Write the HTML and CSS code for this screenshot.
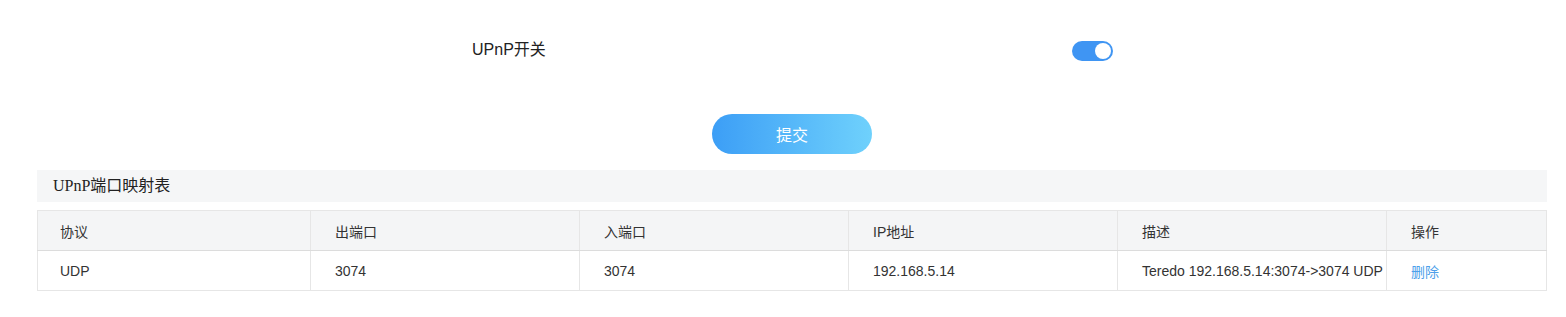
FILE: index.html
```html
<!DOCTYPE html>
<html lang="zh">
<head>
<meta charset="utf-8">
<title>UPnP</title>
<link rel="stylesheet" href="styles.css">
</head>
<body>
<div class="page">
  <div class="form-row">
    <div class="label">UPnP开关</div>
    <div class="switch"><span class="knob"></span></div>
  </div>
  <div class="actions">
    <button class="submit" type="button">提交</button>
  </div>
  <div class="section-title">UPnP端口映射表</div>
  <table class="map-table">
    <colgroup>
      <col class="c1"><col class="c2"><col class="c3"><col class="c4"><col class="c5"><col class="c6">
    </colgroup>
    <thead>
      <tr><th>协议</th><th>出端口</th><th>入端口</th><th>IP地址</th><th>描述</th><th>操作</th></tr>
    </thead>
    <tbody>
      <tr><td>UDP</td><td>3074</td><td>3074</td><td>192.168.5.14</td><td>Teredo 192.168.5.14:3074-&gt;3074 UDP</td><td><a class="del">删除</a></td></tr>
    </tbody>
  </table>
</div>
</body>
</html>
```

FILE: styles.css
```css
* { box-sizing: border-box; }
body {
  margin: 0;
  background: #fff;
  font-family: "Liberation Sans", Arial, "Noto Sans CJK SC", sans-serif;
  color: #333;
}
.page {
  padding: 0 19px 0 37px;
}
.form-row {
  display: flex;
  align-items: flex-start;
  margin-top: 41px;
  padding-left: 435px;
}
.label {
  width: 600px;
  font-size: 16px;
  line-height: 18px;
  color: #222;
}
.switch {
  width: 41px;
  height: 20px;
  border-radius: 10px;
  background: #3f95f3;
  display: flex;
  align-items: center;
  justify-content: flex-end;
  padding-right: 2px;
}
.knob {
  width: 16px;
  height: 16px;
  border-radius: 50%;
  background: #fff;
}
.actions {
  display: flex;
  justify-content: center;
  margin-top: 53px;
}
.submit {
  width: 160px;
  height: 40px;
  border: none;
  border-radius: 20px;
  background: linear-gradient(90deg, #3c9ef6 0%, #6fd1fc 100%);
  color: #fff;
  font-family: "Liberation Sans", "Noto Sans CJK SC", sans-serif;
  font-size: 16px;
  padding: 0;
}
.section-title {
  margin-top: 16px;
  height: 32px;
  background: #f5f6f7;
  font-family: "Liberation Serif", "Noto Sans CJK SC", serif;
  font-size: 16px;
  line-height: 32px;
  padding-left: 16px;
  color: #222;
}
.map-table {
  margin-top: 8px;
  width: 100%;
  border-collapse: collapse;
  table-layout: fixed;
  font-size: 14px;
  border: 1px solid #e6e6e6;
}
.c1 { width: 273px; }
.c2, .c3, .c4, .c5 { width: 269px; }
.c6 { width: auto; }
.map-table th, .map-table td {
  text-align: left;
  font-weight: normal;
  height: 40px;
  padding: 0 0 0 24px;
  border-left: 1px solid #e6e6e6;
  white-space: nowrap;
  color: #333;
}
.map-table th:first-child, .map-table td:first-child { padding-left: 22px; }
.map-table thead th {
  background: #f4f5f6;
  border-bottom: 1px solid #dcdcdc;
}
.del {
  color: #4d9fea;
  cursor: pointer;
}
```
